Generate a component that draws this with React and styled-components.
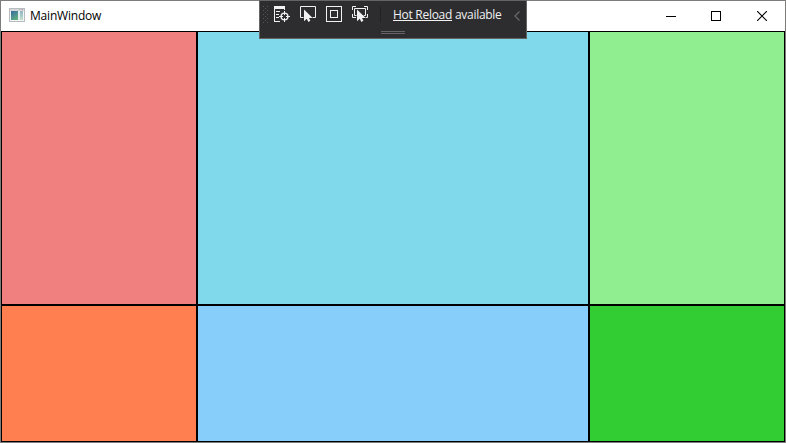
import React from "react";
import styled, { createGlobalStyle } from "styled-components";

const GlobalStyle = createGlobalStyle`
  * { box-sizing: border-box; }
  body { margin: 0; overflow: hidden; }
`;

const Window = styled.div`
  position: relative;
  display: flex;
  flex-direction: column;
  width: 786px;
  height: 443px;
  border: 1px solid #7f7c7c;
  background: #fff;
  font-family: "Open Sans", "Noto Sans", sans-serif;
`;

const TitleBar = styled.header`
  display: flex;
  align-items: center;
  flex: 0 0 30px;
  padding-left: 8px;
`;

const Title = styled.h1`
  flex: 1;
  margin: 0 0 0 5px;
  font-size: 12px;
  line-height: 16px;
  font-weight: 400;
  letter-spacing: -0.2px;
  color: #000;
`;

const CaptionButton = styled.button`
  display: flex;
  align-items: center;
  justify-content: center;
  width: 46px;
  height: 30px;
  padding: 0;
  border: 0;
  background: transparent;
`;

const Icon = styled.svg`
  display: block;
  flex: none;
`;

const ColorGrid = styled.main`
  display: grid;
  flex: 1;
  grid-template-columns: 1fr 2fr 1fr;
  grid-template-rows: 2fr 1fr;
`;

const Cell = styled.div`
  border: 1px solid #000;
  background: ${(p) => p.$color};
`;

const DebugBar = styled.div`
  position: absolute;
  top: -1px;
  left: 258px;
  display: flex;
  flex-direction: column;
  width: 268px;
  height: 39px;
  border: 1px solid #646464;
  background: #2d2d30;
  color: #f1f1f1;
`;

const Tools = styled.div`
  display: flex;
  align-items: center;
  height: 26px;
  padding-left: 3px;
`;

const ToolButton = styled.button`
  display: flex;
  align-items: center;
  justify-content: center;
  width: 26px;
  height: 26px;
  padding: 0;
  border: 0;
  background: transparent;
`;

const Separator = styled.span`
  width: 1px;
  height: 16px;
  margin: 0 12px 0 7px;
  background: #222224;
`;

const Status = styled.span`
  flex: 1;
  margin-top: 1px;
  font-size: 12px;
  line-height: 16px;
  letter-spacing: -0.28px;
  white-space: nowrap;
`;

const Link = styled.span`
  text-decoration: underline;
  text-decoration-thickness: 1px;
  text-decoration-skip-ink: none;
  text-underline-offset: 1px;
`;

const Collapse = styled.button`
  display: flex;
  padding: 0;
  margin: 3px 6px 0 0;
  border: 0;
  background: transparent;
`;

const DragHandle = styled.div`
  align-self: center;
  width: 24px;
  height: 3px;
  margin-top: 4px;
  border: solid #646466;
  border-width: 1px 0;
`;

const Pointer = ({ x, y }) => (
  <path
    transform={`translate(${x} ${y})`}
    d="M0 0V11.8L2.8 9.3L4.3 12.4L6.4 11.3L5 8.4H8.7Z"
    fill="#f1f1f1"
    stroke="#2d2d30"
    strokeWidth="1"
    paintOrder="stroke"
  />
);

const AppIcon = () => (
  <Icon width="16" height="16" viewBox="0 0 16 16">
    <defs>
      <linearGradient id="pane" x1="0" y1="0" x2="0.6" y2="1">
        <stop offset="0" stopColor="#34699a" />
        <stop offset="0.5" stopColor="#4a8b95" />
        <stop offset="1" stopColor="#5fae7b" />
      </linearGradient>
      <linearGradient id="side" x1="0" y1="0" x2="0" y2="1">
        <stop offset="0" stopColor="#8fb4c8" />
        <stop offset="1" stopColor="#c3e0cc" />
      </linearGradient>
    </defs>
    <rect x="0.5" y="0.5" width="15" height="13" fill="#f4f5f6" stroke="#b7bcc0" />
    <rect x="1" y="1" width="14" height="2" fill="#d4d8db" />
    <rect x="10" y="1" width="1" height="1" fill="#a2c8ae" />
    <rect x="12" y="1" width="2" height="1" fill="#c8a8a8" />
    <rect x="2" y="3" width="7" height="9" fill="url(#pane)" />
    <rect x="9" y="3" width="2" height="9" fill="#e4edef" />
    <rect x="11" y="3" width="3" height="9" fill="url(#side)" />
  </Icon>
);

const VisualTreeIcon = () => (
  <Icon width="16" height="16" fill="#f1f1f1">
    <path d="M0 0H11V3H0ZM0 3H1V16H0ZM0 15H6V16H0ZM2 5H6V6H2ZM2 8H5V9H2ZM2 11H5V12H2ZM10 3H11V4H10Z" />
    <circle cx="10.5" cy="10.5" r="3.4" fill="none" stroke="#f1f1f1" strokeWidth="1.4" />
    <path d="M10 5H11V9H10ZM10 12H11V16H10ZM5 10H9V11H5ZM12 10H16V11H12Z" />
  </Icon>
);

const SelectIcon = () => (
  <Icon width="16" height="16">
    <path d="M0.5 11.5V0.5H15.5V11.5Z" fill="none" stroke="#f1f1f1" />
    <Pointer x={4} y={3.5} />
  </Icon>
);

const AdornersIcon = () => (
  <Icon width="16" height="16" fill="none" stroke="#f1f1f1">
    <rect x="0.5" y="0.5" width="15" height="15" />
    <rect x="4.5" y="4.5" width="7" height="7" />
  </Icon>
);

const TrackFocusIcon = () => (
  <Icon width="16" height="16">
    <path
      d="M0.5 4V0.5H4M12 0.5H15.5V4M15.5 8V11.5H12M4 11.5H0.5V8M2.5 2.5H13.5V9.5H2.5Z"
      fill="none"
      stroke="#f1f1f1"
    />
    <Pointer x={5} y={3.5} />
  </Icon>
);

const dots = Array.from({ length: 9 }, (_, row) =>
  (row % 2 ? [2] : [0, 4]).map((x) => ({ x, y: row * 2 }))
).flat();

const Grip = () => (
  <Icon width="6" height="17">
    {dots.map(({ x, y }) => (
      <rect key={`${x}-${y}`} x={x} y={y} width="1" height="1" fill="#57575a" />
    ))}
  </Icon>
);

const cells = ["#f08080", "#80d8eb", "#90ee90", "#ff7f50", "#87cefa", "#32cd32"];
const tools = [VisualTreeIcon, SelectIcon, AdornersIcon, TrackFocusIcon];

export default function App() {
  return (
    <>
      <GlobalStyle />
      <Window>
        <TitleBar>
          <AppIcon />
          <Title>MainWindow</Title>
          <CaptionButton aria-label="Minimize">
            <Icon width="12" height="10"><path d="M2 5.5H12" stroke="#000" /></Icon>
          </CaptionButton>
          <CaptionButton aria-label="Maximize">
            <Icon width="10" height="10"><rect x="0.5" y="0.5" width="9" height="9" fill="none" stroke="#000" /></Icon>
          </CaptionButton>
          <CaptionButton aria-label="Close">
            <Icon width="10" height="10"><path d="M0 0L10 10M10 0L0 10" stroke="#000" strokeWidth="1.1" /></Icon>
          </CaptionButton>
        </TitleBar>
        <ColorGrid>
          {cells.map((color) => <Cell key={color} $color={color} />)}
        </ColorGrid>
        <DebugBar>
          <Tools>
            <Grip />
            {tools.map((Glyph, i) => (
              <ToolButton key={i}><Glyph /></ToolButton>
            ))}
            <Separator />
            <Status><Link>Hot Reload</Link> available</Status>
            <Collapse aria-label="Collapse">
              <Icon width="6" height="10"><path d="M5.5 0.5L1 5L5.5 9.5" fill="none" stroke="#66666a" strokeWidth="1.3" /></Icon>
            </Collapse>
          </Tools>
          <DragHandle />
        </DebugBar>
      </Window>
    </>
  );
}
